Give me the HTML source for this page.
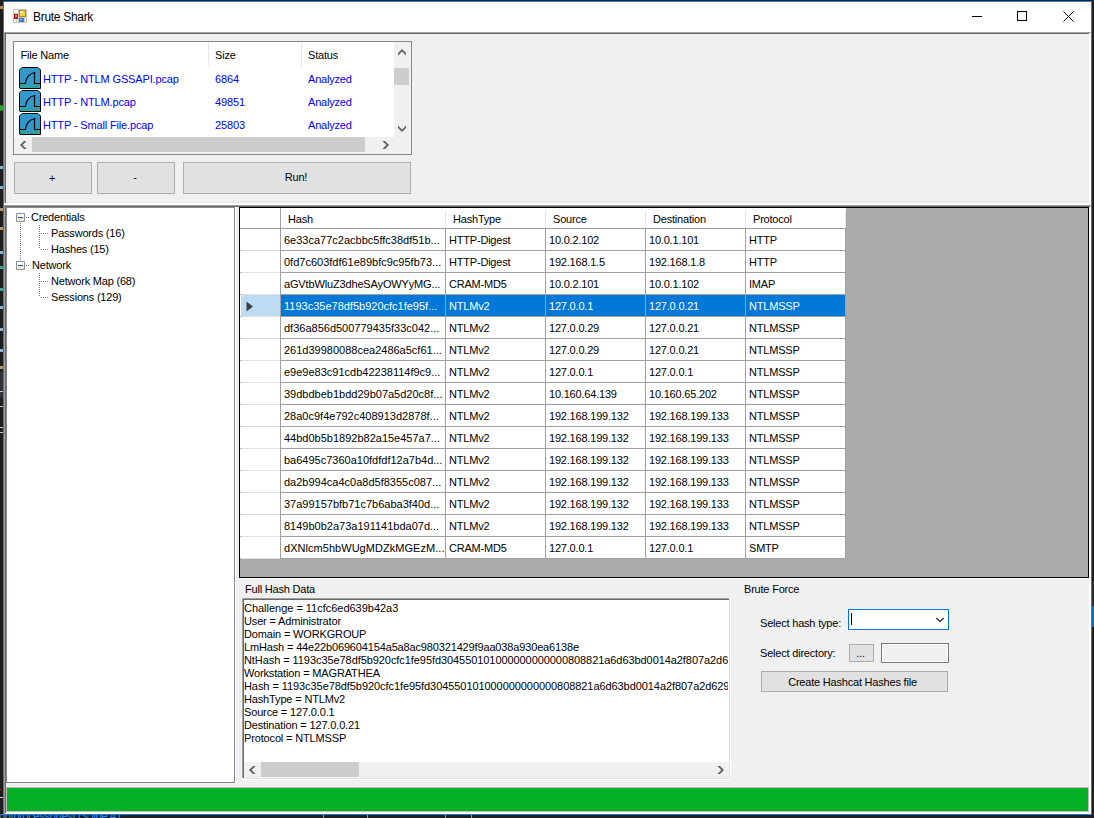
<!DOCTYPE html>
<html><head><meta charset="utf-8"><style>
html,body{margin:0;padding:0;width:1094px;height:818px;overflow:hidden;background:#1e1e1e}
body{position:relative;font-family:"Liberation Sans",sans-serif}
body div{position:absolute;box-sizing:border-box}
.t{white-space:pre;font-family:"Liberation Sans",sans-serif}
</style></head><body>
<div style="left:0px;top:0px;width:1094px;height:818px;background:#1e1e1e"></div>
<div style="left:0px;top:6px;width:3px;height:3px;background:#d7a05a;opacity:0.8"></div>
<div style="left:0px;top:105px;width:3px;height:3px;background:#2aa82a;opacity:0.8"></div>
<div style="left:0px;top:106px;width:3px;height:3px;background:#2aa82a;opacity:0.8"></div>
<div style="left:0px;top:107px;width:3px;height:3px;background:#2aa82a;opacity:0.8"></div>
<div style="left:0px;top:108px;width:3px;height:3px;background:#2aa82a;opacity:0.8"></div>
<div style="left:0px;top:166px;width:3px;height:3px;background:#9cdcfe;opacity:0.8"></div>
<div style="left:0px;top:186px;width:3px;height:3px;background:#9cdcfe;opacity:0.8"></div>
<div style="left:0px;top:208px;width:3px;height:3px;background:#d7ba7d;opacity:0.8"></div>
<div style="left:0px;top:227px;width:3px;height:3px;background:#d7ba7d;opacity:0.8"></div>
<div style="left:0px;top:251px;width:3px;height:3px;background:#9cdcfe;opacity:0.8"></div>
<div style="left:0px;top:266px;width:3px;height:3px;background:#4ec9b0;opacity:0.8"></div>
<div style="left:0px;top:288px;width:3px;height:3px;background:#4ec9b0;opacity:0.8"></div>
<div style="left:0px;top:306px;width:3px;height:3px;background:#9cdcfe;opacity:0.8"></div>
<div style="left:0px;top:328px;width:3px;height:3px;background:#9cdcfe;opacity:0.8"></div>
<div style="left:0px;top:349px;width:3px;height:3px;background:#9cdcfe;opacity:0.8"></div>
<div style="left:0px;top:366px;width:3px;height:3px;background:#d7ba7d;opacity:0.8"></div>
<div style="left:0px;top:372px;width:3px;height:26px;background:#333337"></div>
<div style="left:0px;top:789px;width:1px;height:1px;background:#c03030"></div>
<div style="left:0px;top:797px;width:3px;height:1px;background:#c8c8c8"></div>
<div style="left:0px;top:391px;width:3px;height:1px;background:#c8c8c8"></div>
<div style="left:0px;top:406px;width:3px;height:1px;background:#c8c8c8"></div>
<div style="left:0px;top:427px;width:3px;height:1px;background:#c8c8c8"></div>
<div style="left:0px;top:432px;width:3px;height:1px;background:#c8c8c8"></div>
<div class="t" style="left:-1px;top:810px;font-size:11px;line-height:13px;letter-spacing:-0.3px;color:#3794ff">optprocessortest.cs line 41</div>
<div style="left:323px;top:815px;width:1px;height:3px;background:#9a9a9a"></div>
<div style="left:367px;top:815px;width:1px;height:3px;background:#9a9a9a"></div>
<div style="left:445px;top:815px;width:1px;height:3px;background:#9a9a9a"></div>
<div style="left:471px;top:815px;width:1px;height:3px;background:#9a9a9a"></div>
<div style="left:1092px;top:581px;width:2px;height:25px;background:#2d2d30"></div>
<div style="left:1092px;top:606px;width:2px;height:21px;background:#0e70c0"></div>
<div style="left:3px;top:1px;width:1089px;height:814px;background:#1a82d6"></div>
<div style="left:4px;top:2px;width:1087px;height:30px;background:#fff"></div>
<div style="left:4px;top:32px;width:1087px;height:782px;background:#f0f0f0"></div>
<svg style="position:absolute;left:13px;top:9px" width="14" height="14" viewBox="0 0 14 14" shape-rendering="crispEdges">
<rect x="0" y="0" width="14" height="14" fill="#c4c4c4"/>
<rect x="1" y="1" width="4" height="3" fill="#fff"/>
<rect x="1" y="10" width="2" height="3" fill="#fff"/>
<rect x="4" y="10" width="1" height="3" fill="#fff"/>
<rect x="12" y="9" width="1" height="4" fill="#fff"/>
<rect x="1" y="5" width="4" height="5" fill="#b81c14"/>
<rect x="2" y="6" width="2" height="2" fill="#e87a70"/>
<rect x="6" y="1" width="7" height="7" fill="#c08a00"/>
<rect x="7" y="2" width="5" height="5" fill="#ffd23a"/>
<rect x="7" y="2" width="3" height="2" fill="#ffeaa0"/>
<rect x="6" y="9" width="5" height="4" fill="#3f78d8"/>
<rect x="7" y="10" width="2" height="1" fill="#9cc0f4"/>
</svg>
<div class="t" style="left:33px;top:10px;font-size:12px;line-height:14px;letter-spacing:-0.3px;color:#000;">Brute Shark</div>
<div style="left:972px;top:16px;width:10px;height:1px;background:#000"></div>
<div style="left:1017px;top:11px;width:10px;height:10px;border:1px solid #000;box-sizing:border-box"></div>
<svg style="position:absolute;left:1063px;top:11px" width="11" height="11" viewBox="0 0 11 11">
<path d="M0.5 0.5 L10.5 10.5 M10.5 0.5 L0.5 10.5" stroke="#000" stroke-width="1"/></svg>
<div style="left:4px;top:32px;width:1087px;height:1px;background:#a0a0a0"></div>
<div style="left:4px;top:32px;width:1px;height:782px;background:#a0a0a0"></div>
<div style="left:5px;top:33px;width:1085px;height:1px;background:#696969"></div>
<div style="left:5px;top:33px;width:1px;height:780px;background:#696969"></div>
<div style="left:1089px;top:33px;width:2px;height:781px;background:#fff"></div>
<div style="left:4px;top:812px;width:1087px;height:2px;background:#fff"></div>
<div style="left:13px;top:41px;width:399px;height:114px;background:#828790"></div>
<div style="left:14px;top:42px;width:397px;height:112px;background:#fff"></div>
<div class="t" style="left:20.5px;top:49px;font-size:11px;line-height:13px;letter-spacing:-0.2px;color:#000;">File Name</div>
<div class="t" style="left:215px;top:49px;font-size:11px;line-height:13px;letter-spacing:-0.2px;color:#000;">Size</div>
<div class="t" style="left:308px;top:49px;font-size:11px;line-height:13px;letter-spacing:-0.2px;color:#000;">Status</div>
<div style="left:208px;top:43px;width:1px;height:24px;background:#e5e5e5"></div>
<div style="left:301px;top:43px;width:1px;height:24px;background:#e5e5e5"></div>
<svg style="position:absolute;left:19px;top:67px" width="22" height="22" viewBox="0 0 22 22">
<path d="M3 0.5 H19 L21.5 3 V21.5 H1 L0.5 21 V3 Z" fill="#3399cc" stroke="#000" stroke-width="1"/>
<rect x="1" y="17" width="20" height="4" fill="#339f9f"/>
<rect x="8" y="17" width="7" height="2" fill="#3399cc"/>
<path d="M1 16.5 H6.3 C7 11 10 6.5 16.5 5.2 M15.5 5.5 V16.5 H21" fill="none" stroke="#000" stroke-width="1.15"/>
</svg>
<div class="t" style="left:43px;top:73px;font-size:11px;line-height:13px;letter-spacing:-0.15px;color:#0000ff;">HTTP - NTLM GSSAPI.pcap</div>
<div class="t" style="left:215px;top:73px;font-size:11px;line-height:13px;letter-spacing:-0.1px;color:#0000ff;">6864</div>
<div class="t" style="left:308px;top:73px;font-size:11px;line-height:13px;letter-spacing:-0.2px;color:#0000ff;">Analyzed</div>
<svg style="position:absolute;left:19px;top:90px" width="22" height="22" viewBox="0 0 22 22">
<path d="M3 0.5 H19 L21.5 3 V21.5 H1 L0.5 21 V3 Z" fill="#3399cc" stroke="#000" stroke-width="1"/>
<rect x="1" y="17" width="20" height="4" fill="#339f9f"/>
<rect x="8" y="17" width="7" height="2" fill="#3399cc"/>
<path d="M1 16.5 H6.3 C7 11 10 6.5 16.5 5.2 M15.5 5.5 V16.5 H21" fill="none" stroke="#000" stroke-width="1.15"/>
</svg>
<div class="t" style="left:43px;top:96px;font-size:11px;line-height:13px;letter-spacing:-0.15px;color:#0000ff;">HTTP - NTLM.pcap</div>
<div class="t" style="left:215px;top:96px;font-size:11px;line-height:13px;letter-spacing:-0.1px;color:#0000ff;">49851</div>
<div class="t" style="left:308px;top:96px;font-size:11px;line-height:13px;letter-spacing:-0.2px;color:#0000ff;">Analyzed</div>
<svg style="position:absolute;left:19px;top:113px" width="22" height="22" viewBox="0 0 22 22">
<path d="M3 0.5 H19 L21.5 3 V21.5 H1 L0.5 21 V3 Z" fill="#3399cc" stroke="#000" stroke-width="1"/>
<rect x="1" y="17" width="20" height="4" fill="#339f9f"/>
<rect x="8" y="17" width="7" height="2" fill="#3399cc"/>
<path d="M1 16.5 H6.3 C7 11 10 6.5 16.5 5.2 M15.5 5.5 V16.5 H21" fill="none" stroke="#000" stroke-width="1.15"/>
</svg>
<div class="t" style="left:43px;top:119px;font-size:11px;line-height:13px;letter-spacing:-0.15px;color:#0000ff;">HTTP - Small File.pcap</div>
<div class="t" style="left:215px;top:119px;font-size:11px;line-height:13px;letter-spacing:-0.1px;color:#0000ff;">25803</div>
<div class="t" style="left:308px;top:119px;font-size:11px;line-height:13px;letter-spacing:-0.2px;color:#0000ff;">Analyzed</div>
<div style="left:394px;top:42px;width:17px;height:95px;background:#f0f0f0"></div>
<div style="left:394px;top:68px;width:15px;height:17px;background:#cdcdcd"></div>
<svg style="position:absolute;left:398px;top:49px" width="8" height="7"><path d="M0 4 L4 0 L8 4 L8 6.6 L4 2.6 L0 6.6 Z" fill="#606060"/></svg>
<svg style="position:absolute;left:398px;top:125px" width="8" height="7"><path d="M0 3 L4 7 L8 3 L8 0.4 L4 4.4 L0 0.4 Z" fill="#606060"/></svg>
<div style="left:14px;top:137px;width:397px;height:17px;background:#f0f0f0"></div>
<div style="left:32px;top:137px;width:333px;height:15px;background:#cdcdcd"></div>
<svg style="position:absolute;left:20px;top:141px" width="7" height="8"><path d="M4 0 L0 4 L4 8 L6.6 8 L2.6 4 L6.6 0 Z" fill="#606060"/></svg>
<svg style="position:absolute;left:382px;top:141px" width="7" height="8"><path d="M3 0 L7 4 L3 8 L0.4 8 L4.4 4 L0.4 0 Z" fill="#606060"/></svg>
<div style="left:14px;top:162px;width:78px;height:32px;background:#adadad"></div>
<div style="left:15px;top:163px;width:76px;height:30px;background:#e1e1e1"></div>
<div class="t" style="left:13px;top:162px;width:78px;height:32px;line-height:32px;text-align:center;font-size:11px;letter-spacing:-0.2px">+</div>
<div style="left:97px;top:162px;width:78px;height:32px;background:#adadad"></div>
<div style="left:98px;top:163px;width:76px;height:30px;background:#e1e1e1"></div>
<div class="t" style="left:96px;top:161px;width:78px;height:32px;line-height:32px;text-align:center;font-size:11px;letter-spacing:-0.2px">-</div>
<div style="left:183px;top:162px;width:228px;height:32px;background:#adadad"></div>
<div style="left:184px;top:163px;width:226px;height:30px;background:#e1e1e1"></div>
<div class="t" style="left:182px;top:161px;width:228px;height:32px;line-height:32px;text-align:center;font-size:11px;letter-spacing:-0.2px">Run!</div>
<div style="left:6px;top:202px;width:1083px;height:1px;background:#e8e8e8"></div>
<div style="left:4px;top:203px;width:1087px;height:2px;background:#fff"></div>
<div style="left:4px;top:205px;width:1087px;height:1px;background:#a0a0a0"></div>
<div style="left:4px;top:205px;width:1px;height:609px;background:#a0a0a0"></div>
<div style="left:5px;top:206px;width:1085px;height:1px;background:#696969"></div>
<div style="left:5px;top:206px;width:1px;height:607px;background:#696969"></div>
<div style="left:6px;top:207px;width:229px;height:576px;background:#828790"></div>
<div style="left:7px;top:208px;width:227px;height:574px;background:#fff"></div>
<div style="left:16px;top:213px;width:9px;height:9px;background:#919191;border-radius:1px"></div>
<div style="left:17px;top:214px;width:7px;height:7px;background:linear-gradient(#fff,#e6e6e6)"></div>
<div style="left:18px;top:217px;width:5px;height:1px;background:#2e4fa0"></div>
<div style="left:26px;top:217px;width:1px;height:1px;background:#7a7a7a"></div>
<div style="left:28px;top:217px;width:1px;height:1px;background:#7a7a7a"></div>
<div class="t" style="left:31px;top:211px;font-size:11px;line-height:13px;letter-spacing:-0.2px;color:#000;">Credentials</div>
<div style="left:20px;top:223px;width:1px;height:1px;background:#7a7a7a"></div>
<div style="left:20px;top:225px;width:1px;height:1px;background:#7a7a7a"></div>
<div style="left:20px;top:227px;width:1px;height:1px;background:#7a7a7a"></div>
<div style="left:20px;top:229px;width:1px;height:1px;background:#7a7a7a"></div>
<div style="left:20px;top:231px;width:1px;height:1px;background:#7a7a7a"></div>
<div style="left:20px;top:233px;width:1px;height:1px;background:#7a7a7a"></div>
<div style="left:20px;top:235px;width:1px;height:1px;background:#7a7a7a"></div>
<div style="left:20px;top:237px;width:1px;height:1px;background:#7a7a7a"></div>
<div style="left:20px;top:239px;width:1px;height:1px;background:#7a7a7a"></div>
<div style="left:20px;top:241px;width:1px;height:1px;background:#7a7a7a"></div>
<div style="left:20px;top:243px;width:1px;height:1px;background:#7a7a7a"></div>
<div style="left:20px;top:245px;width:1px;height:1px;background:#7a7a7a"></div>
<div style="left:20px;top:247px;width:1px;height:1px;background:#7a7a7a"></div>
<div style="left:20px;top:249px;width:1px;height:1px;background:#7a7a7a"></div>
<div style="left:20px;top:251px;width:1px;height:1px;background:#7a7a7a"></div>
<div style="left:20px;top:253px;width:1px;height:1px;background:#7a7a7a"></div>
<div style="left:20px;top:255px;width:1px;height:1px;background:#7a7a7a"></div>
<div style="left:20px;top:257px;width:1px;height:1px;background:#7a7a7a"></div>
<div style="left:20px;top:259px;width:1px;height:1px;background:#7a7a7a"></div>
<div style="left:20px;top:261px;width:1px;height:1px;background:#7a7a7a"></div>
<div style="left:39px;top:225px;width:1px;height:1px;background:#7a7a7a"></div>
<div style="left:39px;top:227px;width:1px;height:1px;background:#7a7a7a"></div>
<div style="left:39px;top:229px;width:1px;height:1px;background:#7a7a7a"></div>
<div style="left:39px;top:231px;width:1px;height:1px;background:#7a7a7a"></div>
<div style="left:39px;top:233px;width:1px;height:1px;background:#7a7a7a"></div>
<div style="left:39px;top:235px;width:1px;height:1px;background:#7a7a7a"></div>
<div style="left:39px;top:237px;width:1px;height:1px;background:#7a7a7a"></div>
<div style="left:39px;top:239px;width:1px;height:1px;background:#7a7a7a"></div>
<div style="left:39px;top:241px;width:1px;height:1px;background:#7a7a7a"></div>
<div style="left:39px;top:243px;width:1px;height:1px;background:#7a7a7a"></div>
<div style="left:39px;top:245px;width:1px;height:1px;background:#7a7a7a"></div>
<div style="left:39px;top:247px;width:1px;height:1px;background:#7a7a7a"></div>
<div style="left:41px;top:233px;width:1px;height:1px;background:#7a7a7a"></div>
<div style="left:43px;top:233px;width:1px;height:1px;background:#7a7a7a"></div>
<div style="left:45px;top:233px;width:1px;height:1px;background:#7a7a7a"></div>
<div style="left:47px;top:233px;width:1px;height:1px;background:#7a7a7a"></div>
<div class="t" style="left:51px;top:227px;font-size:11px;line-height:13px;letter-spacing:-0.2px;color:#000;">Passwords (16)</div>
<div style="left:41px;top:249px;width:1px;height:1px;background:#7a7a7a"></div>
<div style="left:43px;top:249px;width:1px;height:1px;background:#7a7a7a"></div>
<div style="left:45px;top:249px;width:1px;height:1px;background:#7a7a7a"></div>
<div style="left:47px;top:249px;width:1px;height:1px;background:#7a7a7a"></div>
<div class="t" style="left:51px;top:243px;font-size:11px;line-height:13px;letter-spacing:-0.2px;color:#000;">Hashes (15)</div>
<div style="left:16px;top:261px;width:9px;height:9px;background:#919191;border-radius:1px"></div>
<div style="left:17px;top:262px;width:7px;height:7px;background:linear-gradient(#fff,#e6e6e6)"></div>
<div style="left:18px;top:265px;width:5px;height:1px;background:#2e4fa0"></div>
<div style="left:26px;top:265px;width:1px;height:1px;background:#7a7a7a"></div>
<div style="left:28px;top:265px;width:1px;height:1px;background:#7a7a7a"></div>
<div class="t" style="left:32px;top:259px;font-size:11px;line-height:13px;letter-spacing:-0.2px;color:#000;">Network</div>
<div style="left:39px;top:273px;width:1px;height:1px;background:#7a7a7a"></div>
<div style="left:39px;top:275px;width:1px;height:1px;background:#7a7a7a"></div>
<div style="left:39px;top:277px;width:1px;height:1px;background:#7a7a7a"></div>
<div style="left:39px;top:279px;width:1px;height:1px;background:#7a7a7a"></div>
<div style="left:39px;top:281px;width:1px;height:1px;background:#7a7a7a"></div>
<div style="left:39px;top:283px;width:1px;height:1px;background:#7a7a7a"></div>
<div style="left:39px;top:285px;width:1px;height:1px;background:#7a7a7a"></div>
<div style="left:39px;top:287px;width:1px;height:1px;background:#7a7a7a"></div>
<div style="left:39px;top:289px;width:1px;height:1px;background:#7a7a7a"></div>
<div style="left:39px;top:291px;width:1px;height:1px;background:#7a7a7a"></div>
<div style="left:39px;top:293px;width:1px;height:1px;background:#7a7a7a"></div>
<div style="left:39px;top:295px;width:1px;height:1px;background:#7a7a7a"></div>
<div style="left:41px;top:281px;width:1px;height:1px;background:#7a7a7a"></div>
<div style="left:43px;top:281px;width:1px;height:1px;background:#7a7a7a"></div>
<div style="left:45px;top:281px;width:1px;height:1px;background:#7a7a7a"></div>
<div style="left:47px;top:281px;width:1px;height:1px;background:#7a7a7a"></div>
<div class="t" style="left:51px;top:275px;font-size:11px;line-height:13px;letter-spacing:-0.2px;color:#000;">Network Map (68)</div>
<div style="left:41px;top:297px;width:1px;height:1px;background:#7a7a7a"></div>
<div style="left:43px;top:297px;width:1px;height:1px;background:#7a7a7a"></div>
<div style="left:45px;top:297px;width:1px;height:1px;background:#7a7a7a"></div>
<div style="left:47px;top:297px;width:1px;height:1px;background:#7a7a7a"></div>
<div class="t" style="left:51px;top:291px;font-size:11px;line-height:13px;letter-spacing:-0.2px;color:#000;">Sessions (129)</div>
<div style="left:235px;top:207px;width:1px;height:576px;background:#fff"></div>
<div style="left:239px;top:207px;width:850px;height:371px;background:#000"></div>
<div style="left:240px;top:208px;width:848px;height:369px;background:#ababab"></div>
<div style="left:240px;top:208px;width:606px;height:21px;background:#fff"></div>
<div class="t" style="left:288px;top:213px;font-size:11px;line-height:13px;letter-spacing:-0.2px;color:#000;">Hash</div>
<div style="left:280px;top:210px;width:1px;height:18px;background:#e5e5e5"></div>
<div class="t" style="left:453px;top:213px;font-size:11px;line-height:13px;letter-spacing:-0.2px;color:#000;">HashType</div>
<div style="left:445px;top:210px;width:1px;height:18px;background:#e5e5e5"></div>
<div class="t" style="left:553px;top:213px;font-size:11px;line-height:13px;letter-spacing:-0.2px;color:#000;">Source</div>
<div style="left:545px;top:210px;width:1px;height:18px;background:#e5e5e5"></div>
<div class="t" style="left:653px;top:213px;font-size:11px;line-height:13px;letter-spacing:-0.2px;color:#000;">Destination</div>
<div style="left:645px;top:210px;width:1px;height:18px;background:#e5e5e5"></div>
<div class="t" style="left:753px;top:213px;font-size:11px;line-height:13px;letter-spacing:-0.2px;color:#000;">Protocol</div>
<div style="left:745px;top:210px;width:1px;height:18px;background:#e5e5e5"></div>
<div style="left:845px;top:210px;width:1px;height:18px;background:#e5e5e5"></div>
<div style="left:240px;top:228px;width:606px;height:1px;background:#a0a0a0"></div>
<div style="left:240px;top:229px;width:40px;height:21px;background:#fff"></div>
<div style="left:241px;top:250px;width:39px;height:1px;background:#e0e0e0"></div>
<div style="left:280px;top:229px;width:566px;height:22px;background:#a0a0a0"></div>
<div style="left:281px;top:229px;width:164px;height:21px;background:#fff"></div>
<div class="t" style="left:284px;top:234px;font-size:11px;line-height:13px;letter-spacing:0px;color:#000;">6e33ca77c2acbbc5ffc38df51b...</div>
<div style="left:446px;top:229px;width:99px;height:21px;background:#fff"></div>
<div class="t" style="left:449px;top:234px;font-size:11px;line-height:13px;letter-spacing:-0.2px;color:#000;">HTTP-Digest</div>
<div style="left:546px;top:229px;width:99px;height:21px;background:#fff"></div>
<div class="t" style="left:549px;top:234px;font-size:11px;line-height:13px;letter-spacing:-0.2px;color:#000;">10.0.2.102</div>
<div style="left:646px;top:229px;width:99px;height:21px;background:#fff"></div>
<div class="t" style="left:649px;top:234px;font-size:11px;line-height:13px;letter-spacing:-0.2px;color:#000;">10.0.1.101</div>
<div style="left:746px;top:229px;width:99px;height:21px;background:#fff"></div>
<div class="t" style="left:749px;top:234px;font-size:11px;line-height:13px;letter-spacing:-0.2px;color:#000;">HTTP</div>
<div style="left:240px;top:251px;width:40px;height:21px;background:#fff"></div>
<div style="left:241px;top:272px;width:39px;height:1px;background:#e0e0e0"></div>
<div style="left:280px;top:251px;width:566px;height:22px;background:#a0a0a0"></div>
<div style="left:281px;top:251px;width:164px;height:21px;background:#fff"></div>
<div class="t" style="left:284px;top:256px;font-size:11px;line-height:13px;letter-spacing:0px;color:#000;">0fd7c603fdf61e89bfc9c95fb73...</div>
<div style="left:446px;top:251px;width:99px;height:21px;background:#fff"></div>
<div class="t" style="left:449px;top:256px;font-size:11px;line-height:13px;letter-spacing:-0.2px;color:#000;">HTTP-Digest</div>
<div style="left:546px;top:251px;width:99px;height:21px;background:#fff"></div>
<div class="t" style="left:549px;top:256px;font-size:11px;line-height:13px;letter-spacing:-0.2px;color:#000;">192.168.1.5</div>
<div style="left:646px;top:251px;width:99px;height:21px;background:#fff"></div>
<div class="t" style="left:649px;top:256px;font-size:11px;line-height:13px;letter-spacing:-0.2px;color:#000;">192.168.1.8</div>
<div style="left:746px;top:251px;width:99px;height:21px;background:#fff"></div>
<div class="t" style="left:749px;top:256px;font-size:11px;line-height:13px;letter-spacing:-0.2px;color:#000;">HTTP</div>
<div style="left:240px;top:273px;width:40px;height:21px;background:#fff"></div>
<div style="left:241px;top:294px;width:39px;height:1px;background:#e0e0e0"></div>
<div style="left:280px;top:273px;width:566px;height:22px;background:#a0a0a0"></div>
<div style="left:281px;top:273px;width:164px;height:21px;background:#fff"></div>
<div class="t" style="left:284px;top:278px;font-size:11px;line-height:13px;letter-spacing:-0.15px;color:#000;">aGVtbWluZ3dheSAyOWYyMG...</div>
<div style="left:446px;top:273px;width:99px;height:21px;background:#fff"></div>
<div class="t" style="left:449px;top:278px;font-size:11px;line-height:13px;letter-spacing:-0.2px;color:#000;">CRAM-MD5</div>
<div style="left:546px;top:273px;width:99px;height:21px;background:#fff"></div>
<div class="t" style="left:549px;top:278px;font-size:11px;line-height:13px;letter-spacing:-0.2px;color:#000;">10.0.2.101</div>
<div style="left:646px;top:273px;width:99px;height:21px;background:#fff"></div>
<div class="t" style="left:649px;top:278px;font-size:11px;line-height:13px;letter-spacing:-0.2px;color:#000;">10.0.1.102</div>
<div style="left:746px;top:273px;width:99px;height:21px;background:#fff"></div>
<div class="t" style="left:749px;top:278px;font-size:11px;line-height:13px;letter-spacing:-0.2px;color:#000;">IMAP</div>
<div style="left:240px;top:295px;width:40px;height:21px;background:#fff"></div>
<div style="left:241px;top:295px;width:39px;height:21px;background:#bddcf3"></div>
<div style="left:241px;top:316px;width:39px;height:1px;background:#e0e0e0"></div>
<svg style="position:absolute;left:246px;top:301px" width="8" height="11"><path d="M0.5 0.5 L7 5.5 L0.5 10.5 Z" fill="#404040"/></svg>
<div style="left:280px;top:295px;width:566px;height:22px;background:#a0a0a0"></div>
<div style="left:281px;top:295px;width:164px;height:21px;background:#0078d7"></div>
<div class="t" style="left:284px;top:300px;font-size:11px;line-height:13px;letter-spacing:0px;color:#fff;">1193c35e78df5b920cfc1fe95f...</div>
<div style="left:446px;top:295px;width:99px;height:21px;background:#0078d7"></div>
<div class="t" style="left:449px;top:300px;font-size:11px;line-height:13px;letter-spacing:-0.2px;color:#fff;">NTLMv2</div>
<div style="left:546px;top:295px;width:99px;height:21px;background:#0078d7"></div>
<div class="t" style="left:549px;top:300px;font-size:11px;line-height:13px;letter-spacing:-0.2px;color:#fff;">127.0.0.1</div>
<div style="left:646px;top:295px;width:99px;height:21px;background:#0078d7"></div>
<div class="t" style="left:649px;top:300px;font-size:11px;line-height:13px;letter-spacing:-0.2px;color:#fff;">127.0.0.21</div>
<div style="left:746px;top:295px;width:99px;height:21px;background:#0078d7"></div>
<div class="t" style="left:749px;top:300px;font-size:11px;line-height:13px;letter-spacing:-0.2px;color:#fff;">NTLMSSP</div>
<div style="left:240px;top:317px;width:40px;height:21px;background:#fff"></div>
<div style="left:241px;top:338px;width:39px;height:1px;background:#e0e0e0"></div>
<div style="left:280px;top:317px;width:566px;height:22px;background:#a0a0a0"></div>
<div style="left:281px;top:317px;width:164px;height:21px;background:#fff"></div>
<div class="t" style="left:284px;top:322px;font-size:11px;line-height:13px;letter-spacing:0px;color:#000;">df36a856d500779435f33c042...</div>
<div style="left:446px;top:317px;width:99px;height:21px;background:#fff"></div>
<div class="t" style="left:449px;top:322px;font-size:11px;line-height:13px;letter-spacing:-0.2px;color:#000;">NTLMv2</div>
<div style="left:546px;top:317px;width:99px;height:21px;background:#fff"></div>
<div class="t" style="left:549px;top:322px;font-size:11px;line-height:13px;letter-spacing:-0.2px;color:#000;">127.0.0.29</div>
<div style="left:646px;top:317px;width:99px;height:21px;background:#fff"></div>
<div class="t" style="left:649px;top:322px;font-size:11px;line-height:13px;letter-spacing:-0.2px;color:#000;">127.0.0.21</div>
<div style="left:746px;top:317px;width:99px;height:21px;background:#fff"></div>
<div class="t" style="left:749px;top:322px;font-size:11px;line-height:13px;letter-spacing:-0.2px;color:#000;">NTLMSSP</div>
<div style="left:240px;top:339px;width:40px;height:21px;background:#fff"></div>
<div style="left:241px;top:360px;width:39px;height:1px;background:#e0e0e0"></div>
<div style="left:280px;top:339px;width:566px;height:22px;background:#a0a0a0"></div>
<div style="left:281px;top:339px;width:164px;height:21px;background:#fff"></div>
<div class="t" style="left:284px;top:344px;font-size:11px;line-height:13px;letter-spacing:0px;color:#000;">261d39980088cea2486a5cf61...</div>
<div style="left:446px;top:339px;width:99px;height:21px;background:#fff"></div>
<div class="t" style="left:449px;top:344px;font-size:11px;line-height:13px;letter-spacing:-0.2px;color:#000;">NTLMv2</div>
<div style="left:546px;top:339px;width:99px;height:21px;background:#fff"></div>
<div class="t" style="left:549px;top:344px;font-size:11px;line-height:13px;letter-spacing:-0.2px;color:#000;">127.0.0.29</div>
<div style="left:646px;top:339px;width:99px;height:21px;background:#fff"></div>
<div class="t" style="left:649px;top:344px;font-size:11px;line-height:13px;letter-spacing:-0.2px;color:#000;">127.0.0.21</div>
<div style="left:746px;top:339px;width:99px;height:21px;background:#fff"></div>
<div class="t" style="left:749px;top:344px;font-size:11px;line-height:13px;letter-spacing:-0.2px;color:#000;">NTLMSSP</div>
<div style="left:240px;top:361px;width:40px;height:21px;background:#fff"></div>
<div style="left:241px;top:382px;width:39px;height:1px;background:#e0e0e0"></div>
<div style="left:280px;top:361px;width:566px;height:22px;background:#a0a0a0"></div>
<div style="left:281px;top:361px;width:164px;height:21px;background:#fff"></div>
<div class="t" style="left:284px;top:366px;font-size:11px;line-height:13px;letter-spacing:0px;color:#000;">e9e9e83c91cdb42238114f9c9...</div>
<div style="left:446px;top:361px;width:99px;height:21px;background:#fff"></div>
<div class="t" style="left:449px;top:366px;font-size:11px;line-height:13px;letter-spacing:-0.2px;color:#000;">NTLMv2</div>
<div style="left:546px;top:361px;width:99px;height:21px;background:#fff"></div>
<div class="t" style="left:549px;top:366px;font-size:11px;line-height:13px;letter-spacing:-0.2px;color:#000;">127.0.0.1</div>
<div style="left:646px;top:361px;width:99px;height:21px;background:#fff"></div>
<div class="t" style="left:649px;top:366px;font-size:11px;line-height:13px;letter-spacing:-0.2px;color:#000;">127.0.0.1</div>
<div style="left:746px;top:361px;width:99px;height:21px;background:#fff"></div>
<div class="t" style="left:749px;top:366px;font-size:11px;line-height:13px;letter-spacing:-0.2px;color:#000;">NTLMSSP</div>
<div style="left:240px;top:383px;width:40px;height:21px;background:#fff"></div>
<div style="left:241px;top:404px;width:39px;height:1px;background:#e0e0e0"></div>
<div style="left:280px;top:383px;width:566px;height:22px;background:#a0a0a0"></div>
<div style="left:281px;top:383px;width:164px;height:21px;background:#fff"></div>
<div class="t" style="left:284px;top:388px;font-size:11px;line-height:13px;letter-spacing:0px;color:#000;">39dbdbeb1bdd29b07a5d20c8f...</div>
<div style="left:446px;top:383px;width:99px;height:21px;background:#fff"></div>
<div class="t" style="left:449px;top:388px;font-size:11px;line-height:13px;letter-spacing:-0.2px;color:#000;">NTLMv2</div>
<div style="left:546px;top:383px;width:99px;height:21px;background:#fff"></div>
<div class="t" style="left:549px;top:388px;font-size:11px;line-height:13px;letter-spacing:-0.2px;color:#000;">10.160.64.139</div>
<div style="left:646px;top:383px;width:99px;height:21px;background:#fff"></div>
<div class="t" style="left:649px;top:388px;font-size:11px;line-height:13px;letter-spacing:-0.2px;color:#000;">10.160.65.202</div>
<div style="left:746px;top:383px;width:99px;height:21px;background:#fff"></div>
<div class="t" style="left:749px;top:388px;font-size:11px;line-height:13px;letter-spacing:-0.2px;color:#000;">NTLMSSP</div>
<div style="left:240px;top:405px;width:40px;height:21px;background:#fff"></div>
<div style="left:241px;top:426px;width:39px;height:1px;background:#e0e0e0"></div>
<div style="left:280px;top:405px;width:566px;height:22px;background:#a0a0a0"></div>
<div style="left:281px;top:405px;width:164px;height:21px;background:#fff"></div>
<div class="t" style="left:284px;top:410px;font-size:11px;line-height:13px;letter-spacing:0px;color:#000;">28a0c9f4e792c408913d2878f...</div>
<div style="left:446px;top:405px;width:99px;height:21px;background:#fff"></div>
<div class="t" style="left:449px;top:410px;font-size:11px;line-height:13px;letter-spacing:-0.2px;color:#000;">NTLMv2</div>
<div style="left:546px;top:405px;width:99px;height:21px;background:#fff"></div>
<div class="t" style="left:549px;top:410px;font-size:11px;line-height:13px;letter-spacing:-0.2px;color:#000;">192.168.199.132</div>
<div style="left:646px;top:405px;width:99px;height:21px;background:#fff"></div>
<div class="t" style="left:649px;top:410px;font-size:11px;line-height:13px;letter-spacing:-0.2px;color:#000;">192.168.199.133</div>
<div style="left:746px;top:405px;width:99px;height:21px;background:#fff"></div>
<div class="t" style="left:749px;top:410px;font-size:11px;line-height:13px;letter-spacing:-0.2px;color:#000;">NTLMSSP</div>
<div style="left:240px;top:427px;width:40px;height:21px;background:#fff"></div>
<div style="left:241px;top:448px;width:39px;height:1px;background:#e0e0e0"></div>
<div style="left:280px;top:427px;width:566px;height:22px;background:#a0a0a0"></div>
<div style="left:281px;top:427px;width:164px;height:21px;background:#fff"></div>
<div class="t" style="left:284px;top:432px;font-size:11px;line-height:13px;letter-spacing:0px;color:#000;">44bd0b5b1892b82a15e457a7...</div>
<div style="left:446px;top:427px;width:99px;height:21px;background:#fff"></div>
<div class="t" style="left:449px;top:432px;font-size:11px;line-height:13px;letter-spacing:-0.2px;color:#000;">NTLMv2</div>
<div style="left:546px;top:427px;width:99px;height:21px;background:#fff"></div>
<div class="t" style="left:549px;top:432px;font-size:11px;line-height:13px;letter-spacing:-0.2px;color:#000;">192.168.199.132</div>
<div style="left:646px;top:427px;width:99px;height:21px;background:#fff"></div>
<div class="t" style="left:649px;top:432px;font-size:11px;line-height:13px;letter-spacing:-0.2px;color:#000;">192.168.199.133</div>
<div style="left:746px;top:427px;width:99px;height:21px;background:#fff"></div>
<div class="t" style="left:749px;top:432px;font-size:11px;line-height:13px;letter-spacing:-0.2px;color:#000;">NTLMSSP</div>
<div style="left:240px;top:449px;width:40px;height:21px;background:#fff"></div>
<div style="left:241px;top:470px;width:39px;height:1px;background:#e0e0e0"></div>
<div style="left:280px;top:449px;width:566px;height:22px;background:#a0a0a0"></div>
<div style="left:281px;top:449px;width:164px;height:21px;background:#fff"></div>
<div class="t" style="left:284px;top:454px;font-size:11px;line-height:13px;letter-spacing:0px;color:#000;">ba6495c7360a10fdfdf12a7b4d...</div>
<div style="left:446px;top:449px;width:99px;height:21px;background:#fff"></div>
<div class="t" style="left:449px;top:454px;font-size:11px;line-height:13px;letter-spacing:-0.2px;color:#000;">NTLMv2</div>
<div style="left:546px;top:449px;width:99px;height:21px;background:#fff"></div>
<div class="t" style="left:549px;top:454px;font-size:11px;line-height:13px;letter-spacing:-0.2px;color:#000;">192.168.199.132</div>
<div style="left:646px;top:449px;width:99px;height:21px;background:#fff"></div>
<div class="t" style="left:649px;top:454px;font-size:11px;line-height:13px;letter-spacing:-0.2px;color:#000;">192.168.199.133</div>
<div style="left:746px;top:449px;width:99px;height:21px;background:#fff"></div>
<div class="t" style="left:749px;top:454px;font-size:11px;line-height:13px;letter-spacing:-0.2px;color:#000;">NTLMSSP</div>
<div style="left:240px;top:471px;width:40px;height:21px;background:#fff"></div>
<div style="left:241px;top:492px;width:39px;height:1px;background:#e0e0e0"></div>
<div style="left:280px;top:471px;width:566px;height:22px;background:#a0a0a0"></div>
<div style="left:281px;top:471px;width:164px;height:21px;background:#fff"></div>
<div class="t" style="left:284px;top:476px;font-size:11px;line-height:13px;letter-spacing:0px;color:#000;">da2b994ca4c0a8d5f8355c087...</div>
<div style="left:446px;top:471px;width:99px;height:21px;background:#fff"></div>
<div class="t" style="left:449px;top:476px;font-size:11px;line-height:13px;letter-spacing:-0.2px;color:#000;">NTLMv2</div>
<div style="left:546px;top:471px;width:99px;height:21px;background:#fff"></div>
<div class="t" style="left:549px;top:476px;font-size:11px;line-height:13px;letter-spacing:-0.2px;color:#000;">192.168.199.132</div>
<div style="left:646px;top:471px;width:99px;height:21px;background:#fff"></div>
<div class="t" style="left:649px;top:476px;font-size:11px;line-height:13px;letter-spacing:-0.2px;color:#000;">192.168.199.133</div>
<div style="left:746px;top:471px;width:99px;height:21px;background:#fff"></div>
<div class="t" style="left:749px;top:476px;font-size:11px;line-height:13px;letter-spacing:-0.2px;color:#000;">NTLMSSP</div>
<div style="left:240px;top:493px;width:40px;height:21px;background:#fff"></div>
<div style="left:241px;top:514px;width:39px;height:1px;background:#e0e0e0"></div>
<div style="left:280px;top:493px;width:566px;height:22px;background:#a0a0a0"></div>
<div style="left:281px;top:493px;width:164px;height:21px;background:#fff"></div>
<div class="t" style="left:284px;top:498px;font-size:11px;line-height:13px;letter-spacing:0px;color:#000;">37a99157bfb71c7b6aba3f40d...</div>
<div style="left:446px;top:493px;width:99px;height:21px;background:#fff"></div>
<div class="t" style="left:449px;top:498px;font-size:11px;line-height:13px;letter-spacing:-0.2px;color:#000;">NTLMv2</div>
<div style="left:546px;top:493px;width:99px;height:21px;background:#fff"></div>
<div class="t" style="left:549px;top:498px;font-size:11px;line-height:13px;letter-spacing:-0.2px;color:#000;">192.168.199.132</div>
<div style="left:646px;top:493px;width:99px;height:21px;background:#fff"></div>
<div class="t" style="left:649px;top:498px;font-size:11px;line-height:13px;letter-spacing:-0.2px;color:#000;">192.168.199.133</div>
<div style="left:746px;top:493px;width:99px;height:21px;background:#fff"></div>
<div class="t" style="left:749px;top:498px;font-size:11px;line-height:13px;letter-spacing:-0.2px;color:#000;">NTLMSSP</div>
<div style="left:240px;top:515px;width:40px;height:21px;background:#fff"></div>
<div style="left:241px;top:536px;width:39px;height:1px;background:#e0e0e0"></div>
<div style="left:280px;top:515px;width:566px;height:22px;background:#a0a0a0"></div>
<div style="left:281px;top:515px;width:164px;height:21px;background:#fff"></div>
<div class="t" style="left:284px;top:520px;font-size:11px;line-height:13px;letter-spacing:0px;color:#000;">8149b0b2a73a191141bda07d...</div>
<div style="left:446px;top:515px;width:99px;height:21px;background:#fff"></div>
<div class="t" style="left:449px;top:520px;font-size:11px;line-height:13px;letter-spacing:-0.2px;color:#000;">NTLMv2</div>
<div style="left:546px;top:515px;width:99px;height:21px;background:#fff"></div>
<div class="t" style="left:549px;top:520px;font-size:11px;line-height:13px;letter-spacing:-0.2px;color:#000;">192.168.199.132</div>
<div style="left:646px;top:515px;width:99px;height:21px;background:#fff"></div>
<div class="t" style="left:649px;top:520px;font-size:11px;line-height:13px;letter-spacing:-0.2px;color:#000;">192.168.199.133</div>
<div style="left:746px;top:515px;width:99px;height:21px;background:#fff"></div>
<div class="t" style="left:749px;top:520px;font-size:11px;line-height:13px;letter-spacing:-0.2px;color:#000;">NTLMSSP</div>
<div style="left:240px;top:537px;width:40px;height:21px;background:#fff"></div>
<div style="left:241px;top:558px;width:39px;height:1px;background:#e0e0e0"></div>
<div style="left:280px;top:537px;width:566px;height:22px;background:#a0a0a0"></div>
<div style="left:281px;top:537px;width:164px;height:21px;background:#fff"></div>
<div class="t" style="left:284px;top:542px;font-size:11px;line-height:13px;letter-spacing:0.04px;color:#000;">dXNlcm5hbWUgMDZkMGEzM...</div>
<div style="left:446px;top:537px;width:99px;height:21px;background:#fff"></div>
<div class="t" style="left:449px;top:542px;font-size:11px;line-height:13px;letter-spacing:-0.2px;color:#000;">CRAM-MD5</div>
<div style="left:546px;top:537px;width:99px;height:21px;background:#fff"></div>
<div class="t" style="left:549px;top:542px;font-size:11px;line-height:13px;letter-spacing:-0.2px;color:#000;">127.0.0.1</div>
<div style="left:646px;top:537px;width:99px;height:21px;background:#fff"></div>
<div class="t" style="left:649px;top:542px;font-size:11px;line-height:13px;letter-spacing:-0.2px;color:#000;">127.0.0.1</div>
<div style="left:746px;top:537px;width:99px;height:21px;background:#fff"></div>
<div class="t" style="left:749px;top:542px;font-size:11px;line-height:13px;letter-spacing:-0.2px;color:#000;">SMTP</div>
<div style="left:280px;top:208px;width:1px;height:21px;background:#a0a0a0"></div>
<div style="left:239px;top:578px;width:850px;height:1px;background:#fff"></div>
<div class="t" style="left:245px;top:583px;font-size:11px;line-height:13px;letter-spacing:-0.2px;color:#000;">Full Hash Data</div>
<div class="t" style="left:744px;top:583px;font-size:11px;line-height:13px;letter-spacing:-0.2px;color:#000;">Brute Force</div>
<div style="left:242px;top:598px;width:488px;height:181px;background:#fff"></div>
<div style="left:242px;top:598px;width:487px;height:1px;background:#a0a0a0"></div>
<div style="left:242px;top:598px;width:1px;height:180px;background:#a0a0a0"></div>
<div style="left:243px;top:599px;width:486px;height:1px;background:#696969"></div>
<div style="left:243px;top:599px;width:1px;height:179px;background:#696969"></div>
<div style="left:729px;top:599px;width:1px;height:180px;background:#e3e3e3"></div>
<div style="left:243px;top:778px;width:487px;height:1px;background:#e3e3e3"></div>
<div style="left:730px;top:598px;width:1px;height:182px;background:#fff"></div>
<div style="left:242px;top:779px;width:489px;height:1px;background:#fff"></div>
<div style="left:244px;top:600px;width:484px;height:162px;overflow:hidden">
<div class="t" style="left:0px;top:2px;font-size:11px;line-height:13px;letter-spacing:-0.02px">Challenge = 11cfc6ed639b42a3</div>
<div class="t" style="left:0px;top:15px;font-size:11px;line-height:13px;letter-spacing:-0.15px">User = Administrator</div>
<div class="t" style="left:0px;top:28px;font-size:11px;line-height:13px;letter-spacing:-0.15px">Domain = WORKGROUP</div>
<div class="t" style="left:0px;top:41px;font-size:11px;line-height:13px;letter-spacing:-0.15px">LmHash = 44e22b069604154a5a8ac980321429f9aa038a930ea6138e</div>
<div class="t" style="left:0px;top:54px;font-size:11px;line-height:13px;letter-spacing:-0.07px">NtHash = 1193c35e78df5b920cfc1fe95fd304550101000000000000808821a6d63bd0014a2f807a2d6</div>
<div class="t" style="left:0px;top:67px;font-size:11px;line-height:13px;letter-spacing:-0.15px">Workstation = MAGRATHEA</div>
<div class="t" style="left:0px;top:80px;font-size:11px;line-height:13px;letter-spacing:-0.07px">Hash = 1193c35e78df5b920cfc1fe95fd304550101000000000000808821a6d63bd0014a2f807a2d629</div>
<div class="t" style="left:0px;top:93px;font-size:11px;line-height:13px;letter-spacing:-0.15px">HashType = NTLMv2</div>
<div class="t" style="left:0px;top:106px;font-size:11px;line-height:13px;letter-spacing:-0.15px">Source = 127.0.0.1</div>
<div class="t" style="left:0px;top:119px;font-size:11px;line-height:13px;letter-spacing:-0.15px">Destination = 127.0.0.21</div>
<div class="t" style="left:0px;top:132px;font-size:11px;line-height:13px;letter-spacing:-0.15px">Protocol = NTLMSSP</div>
</div>
<div style="left:244px;top:762px;width:485px;height:16px;background:#f0f0f0"></div>
<div style="left:261px;top:762px;width:98px;height:15px;background:#cdcdcd"></div>
<svg style="position:absolute;left:249px;top:766px" width="7" height="8"><path d="M4 0 L0 4 L4 8 L6.6 8 L2.6 4 L6.6 0 Z" fill="#606060"/></svg>
<svg style="position:absolute;left:717px;top:766px" width="7" height="8"><path d="M3 0 L7 4 L3 8 L0.4 8 L4.4 4 L0.4 0 Z" fill="#606060"/></svg>
<div class="t" style="left:760px;top:617px;font-size:11px;line-height:13px;letter-spacing:-0.2px;color:#000;">Select hash type:</div>
<div style="left:848px;top:609px;width:101px;height:21px;background:#0078d7"></div>
<div style="left:849px;top:610px;width:99px;height:19px;background:#fff"></div>
<div style="left:851px;top:613px;width:1px;height:12px;background:#000"></div>
<svg style="position:absolute;left:935px;top:616px" width="10" height="8"><path d="M1.3 2 L5 5.6 L8.7 2" fill="none" stroke="#3a3a3a" stroke-width="1.4"/></svg>
<div class="t" style="left:760px;top:647px;font-size:11px;line-height:13px;letter-spacing:-0.2px;color:#000;">Select directory:</div>
<div style="left:849px;top:644px;width:25px;height:18px;background:#adadad"></div>
<div style="left:850px;top:645px;width:23px;height:16px;background:#e1e1e1"></div>
<div class="t" style="left:848px;top:644px;width:25px;height:18px;line-height:18px;text-align:center;font-size:11px;letter-spacing:-0.2px">...</div>
<div style="left:881px;top:643px;width:68px;height:20px;background:#7a7a7a"></div>
<div style="left:882px;top:644px;width:66px;height:18px;background:#fff"></div>
<div style="left:883px;top:645px;width:64px;height:16px;background:#f0f0f0"></div>
<div style="left:761px;top:671px;width:187px;height:21px;background:#adadad"></div>
<div style="left:762px;top:672px;width:185px;height:19px;background:#e1e1e1"></div>
<div class="t" style="left:759px;top:672px;width:187px;height:21px;line-height:21px;text-align:center;font-size:11px;letter-spacing:-0.2px">Create Hashcat Hashes file</div>
<div style="left:6px;top:787px;width:1083px;height:25px;background:#bcbcbc"></div>
<div style="left:7px;top:788px;width:1081px;height:23px;background:#06b025"></div>
</body></html>
